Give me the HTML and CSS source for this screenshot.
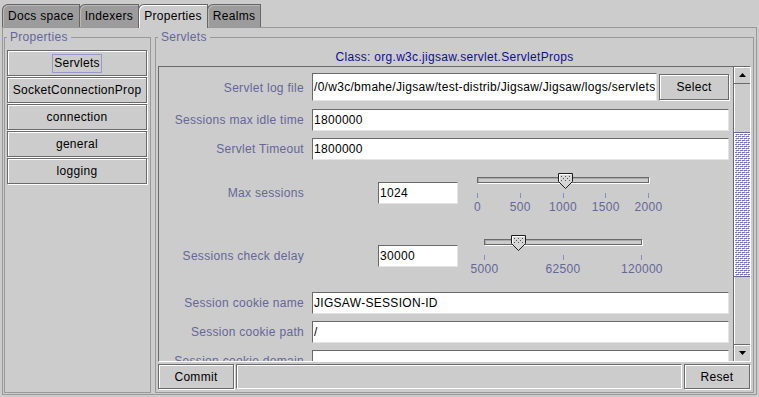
FILE: index.html
```html
<!DOCTYPE html>
<html lang="en">
<head>
  <meta charset="UTF-8" />
  <meta name="viewport" content="width=device-width, initial-scale=1" />
  <title>Jigsaw Admin - Properties</title>
  <link rel="stylesheet" href="styles.css">
</head>
<body>

  <div class="tabs">
    <div class="tab">Docs space</div>
    <div class="tab">Indexers</div>
    <div class="tab active">Properties</div>
    <div class="tab">Realms</div>
  </div>

  <div class="tab-body">
    <fieldset class="group side">
      <legend>Properties</legend>
      <div class="prop-list">
        <button class="btn prop-btn"><span class="focus">Servlets</span></button>
        <button class="btn prop-btn">SocketConnectionProp</button>
        <button class="btn prop-btn">connection</button>
        <button class="btn prop-btn">general</button>
        <button class="btn prop-btn">logging</button>
      </div>
    </fieldset>

    <fieldset class="group main">
      <legend>Servlets</legend>
      <div class="class-name">Class: org.w3c.jigsaw.servlet.ServletProps</div>

      <div class="scroll-pane">
        <div class="viewport">
          <div class="form">
            <label>Servlet log file</label>
            <div class="cell file-cell">
              <input class="field path" value="/0/w3c/bmahe/Jigsaw/test-distrib/Jigsaw/Jigsaw/logs/servlets" />
              <button class="btn select">Select</button>
            </div>

            <label>Sessions max idle time</label>
            <div class="cell"><input class="field" value="1800000" /></div>

            <label>Servlet Timeout</label>
            <div class="cell"><input class="field" value="1800000" /></div>

            <label>Max sessions</label>
            <div class="cell">
              <input class="field short" value="1024" />
              <div class="slider wide">
                <div class="rail">
                  <div class="groove"></div>
                  <!-- 1024 of 0..2000 -->
                  <div class="knob" style="left: 51.2%">
                    <svg width="15" height="16" viewBox="0 0 15 16">
                      <polygon points="0.5,0.5 14.5,0.5 14.5,8.5 7.5,15.5 0.5,8.5" fill="#d6d6d6" stroke="#1e1e1e"/>
                      <polyline points="1.5,8.5 1.5,1.5 13.5,1.5" fill="none" stroke="#ffffff"/>
                      <g fill="#555">
                        <rect x="3" y="3" width="1" height="1"/><rect x="7" y="3" width="1" height="1"/><rect x="11" y="3" width="1" height="1"/>
                        <rect x="5" y="5" width="1" height="1"/><rect x="9" y="5" width="1" height="1"/>
                        <rect x="3" y="7" width="1" height="1"/><rect x="7" y="7" width="1" height="1"/><rect x="11" y="7" width="1" height="1"/>
                      </g>
                    </svg>
                  </div>
                </div>
                <div class="ticks"><i></i><i></i><i></i><i></i><i></i></div>
                <div class="tick-labels"><span>0</span><span>500</span><span>1000</span><span>1500</span><span>2000</span></div>
              </div>
            </div>

            <label>Sessions check delay</label>
            <div class="cell">
              <input class="field short" value="30000" />
              <div class="slider narrow">
                <div class="rail">
                  <div class="groove"></div>
                  <!-- 30000 of 5000..120000 -->
                  <div class="knob" style="left: 21.7%">
                    <svg width="15" height="16" viewBox="0 0 15 16">
                      <polygon points="0.5,0.5 14.5,0.5 14.5,8.5 7.5,15.5 0.5,8.5" fill="#d6d6d6" stroke="#1e1e1e"/>
                      <polyline points="1.5,8.5 1.5,1.5 13.5,1.5" fill="none" stroke="#ffffff"/>
                      <g fill="#555">
                        <rect x="3" y="3" width="1" height="1"/><rect x="7" y="3" width="1" height="1"/><rect x="11" y="3" width="1" height="1"/>
                        <rect x="5" y="5" width="1" height="1"/><rect x="9" y="5" width="1" height="1"/>
                        <rect x="3" y="7" width="1" height="1"/><rect x="7" y="7" width="1" height="1"/><rect x="11" y="7" width="1" height="1"/>
                      </g>
                    </svg>
                  </div>
                </div>
                <div class="ticks"><i></i><i></i><i></i></div>
                <div class="tick-labels"><span>5000</span><span>62500</span><span>120000</span></div>
              </div>
            </div>

            <label>Session cookie name</label>
            <div class="cell"><input class="field" value="JIGSAW-SESSION-ID" /></div>

            <label>Session cookie path</label>
            <div class="cell"><input class="field" value="/" /></div>

            <label>Session cookie domain</label>
            <div class="cell"><input class="field" value="" /></div>
          </div>
        </div>

        <div class="scrollbar">
          <div class="arrow">
            <svg width="7" height="4" viewBox="0 0 7 4"><polygon points="0,4 3.5,0 7,4" fill="#000"/></svg>
          </div>
          <div class="thumb"></div>
          <div class="arrow down">
            <svg width="7" height="4" viewBox="0 0 7 4"><polygon points="0,0 7,0 3.5,4" fill="#000"/></svg>
          </div>
        </div>
      </div>

      <div class="actions">
        <button class="btn commit">Commit</button>
        <div class="status"></div>
        <button class="btn reset">Reset</button>
      </div>
    </fieldset>
  </div>

</body>
</html>
```

FILE: styles.css
```css
* {
  box-sizing: border-box;
}

body {
  margin: 0;
  width: 759px;
  height: 397px;
  overflow: hidden;
  background: #cccccc;
  font-family: "Liberation Sans", Arial, sans-serif;
  font-size: 12px;
  letter-spacing: 0.3px;
  color: #000;
}

/* tab strip */
.tabs {
  display: flex;
  align-items: flex-end;
  height: 27px;
  padding: 4px 0 0 2px;
}

.tab {
  height: 23px;
  line-height: 22px;
  padding: 0 5px;
  margin-right: -1px;
  background: #9c9c9c;
  border: 1px solid #666666;
  border-bottom: none;
  border-top-left-radius: 6px;
  box-shadow: inset 1px 1px 0 #b8b8b8;
  white-space: nowrap;
}

.tab.active {
  height: 24px;
  margin-bottom: -1px;
  position: relative;
  z-index: 1;
  background: #cccccc;
  box-shadow: inset 1px 1px 0 #ffffff;
}

.tab-body {
  display: flex;
  gap: 4px;
  height: 368px;
  margin: 0 2px;
  padding: 3px 2px 1px 1px;
  border: 1px solid #999999;
}

/* titled groups */
.group {
  margin: 0;
  padding: 0 2px 2px;
  min-width: 0;
  border: 1px solid #999999;
}

.group legend {
  padding: 0 3px;
  line-height: 13px;
  color: #666699;
}

.side {
  width: 147px;
  flex: none;
}

.main {
  flex: 1;
  display: flex;
  flex-direction: column;
}

/* buttons */
.btn {
  display: block;
  padding: 0;
  margin: 0;
  font: inherit;
  letter-spacing: inherit;
  color: #000;
  background: #cccccc;
  border: 1px solid #6a6a6a;
  box-shadow: inset 1px 1px 0 #ffffff, 1px 1px 0 #ffffff;
  cursor: pointer;
}

.prop-list {
  padding-top: 6px;
}

.prop-btn {
  width: calc(100% - 1px);
  height: 26px;
  margin-bottom: 1px;
  white-space: nowrap;
}

.focus {
  display: inline-block;
  line-height: 15px;
  padding: 1px;
  border: 1px solid #9999cc;
}

.class-name {
  height: 22px;
  padding-top: 4px;
  line-height: 18px;
  text-align: center;
  color: #101085;
}

/* scroll pane */
.scroll-pane {
  display: flex;
  height: 296px;
  flex: none;
  border: 1px solid;
  border-color: #6a6a6a #ffffff #ffffff #6a6a6a;
}

.viewport {
  flex: 1;
  overflow: hidden;
}

.form {
  display: grid;
  grid-template-columns: 145px 1fr;
  grid-template-rows: 29px 22px 22px 52px 59px 22px 22px 22px;
  column-gap: 8px;
  row-gap: 7px;
  padding: 6px 4px 0 0;
}

.form label {
  display: flex;
  align-items: center;
  justify-content: flex-end;
  color: #666699;
  white-space: nowrap;
}

.cell {
  display: flex;
  align-items: center;
}

.field {
  width: 100%;
  height: 22px;
  margin: 0;
  padding: 0 1px;
  font: inherit;
  letter-spacing: inherit;
  color: #000;
  background: #ffffff;
  border: 1px solid;
  border-color: #6a6a6a #e4e4e4 #e4e4e4 #6a6a6a;
  outline: none;
}

.file-cell {
  align-items: flex-start;
}

.field.path {
  flex: 1;
  height: 28px;
}

.select {
  flex: none;
  width: 70px;
  height: 26px;
  margin: 1px 0 0 2px;
}

.field.short {
  width: 80px;
  flex: none;
  margin-left: 66px;
}

/* sliders */
.slider {
  flex: none;
}

.slider.wide {
  width: 172px;
  margin-left: 19px;
}

.slider.narrow {
  width: 158px;
  margin-left: 26px;
}

.rail {
  position: relative;
  height: 16px;
  padding-top: 4px;
}

.groove {
  height: 6px;
  background: #cccccc;
  border: 1px solid #6a6a6a;
  box-shadow: 1px 1px 0 #ffffff, inset 1px 1px 0 #aaaaaa;
}

.knob {
  position: absolute;
  top: 0;
  width: 15px;
  height: 16px;
  margin-left: -7px;
}

.knob svg {
  display: block;
}

.ticks {
  display: flex;
  justify-content: space-between;
  height: 5px;
  margin-top: 4px;
}

.ticks i {
  width: 1px;
  background: #8c8cc4;
}

.tick-labels {
  display: flex;
  justify-content: space-between;
  margin: 2px -20px 0;
  line-height: 14px;
  color: #666699;
}

.tick-labels span {
  width: 41px;
  text-align: center;
}

/* scrollbar */
.scrollbar {
  width: 17px;
  flex: none;
  display: flex;
  flex-direction: column;
  background: #cccccc;
  border-left: 1px solid #6a6a6a;
  box-shadow: inset 1px 0 0 #ffffff;
}

.arrow {
  height: 17px;
  display: flex;
  align-items: center;
  justify-content: center;
  background: #cccccc;
  border-bottom: 1px solid #6a6a6a;
  box-shadow: inset 1px 1px 0 #ffffff;
}

.arrow.down {
  margin-top: auto;
  border-bottom: none;
  border-top: 1px solid #6a6a6a;
}

.thumb {
  margin-top: 48px;
  height: 145px;
  background-color: #ccccff;
  background-image:
    conic-gradient(from 90deg at 1px 1px, transparent 75%, #ffffff 0),
    conic-gradient(from 90deg at 1px 1px, transparent 75%, #ffffff 0),
    conic-gradient(from 90deg at 1px 1px, transparent 75%, #7777b0 0),
    conic-gradient(from 90deg at 1px 1px, transparent 75%, #7777b0 0);
  background-size: 4px 4px;
  background-position: 2px 2px, 4px 4px, 3px 3px, 5px 5px;
  border-top: 1px solid #666699;
  border-bottom: 1px solid #666699;
  box-shadow: inset 1px 1px 0 #ffffff;
}

/* bottom bar */
.actions {
  display: flex;
  gap: 2px;
  height: 26px;
  margin-top: 2px;
  flex: none;
}

.commit {
  width: 76px;
  height: 25px;
}

.status {
  flex: 1;
  height: 25px;
  border: 1px solid;
  border-color: #6a6a6a #ffffff #ffffff #6a6a6a;
  box-shadow: inset 1px 1px 0 #ffffff;
}

.reset {
  width: 66px;
  height: 25px;
  margin-right: 1px;
}
```
